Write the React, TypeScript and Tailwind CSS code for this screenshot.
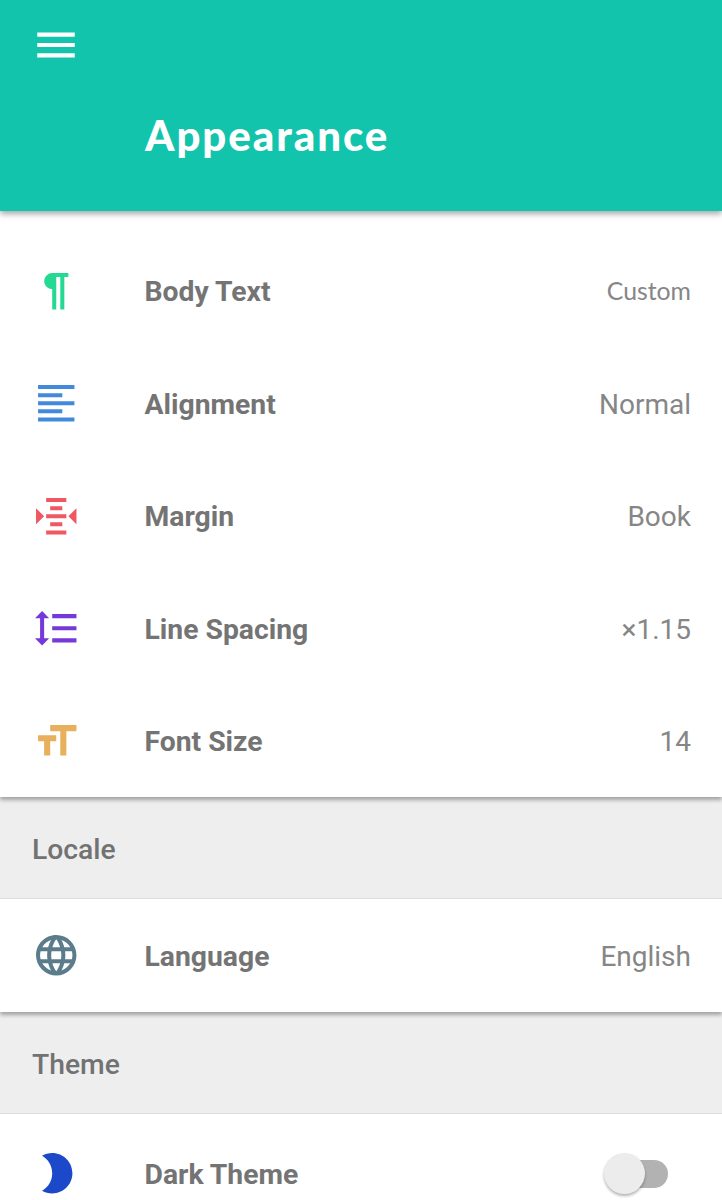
import type { ReactNode } from "react";

const icons = {
  pilcrow:
    "M10,11A4,4 0 0,1 6,7A4,4 0 0,1 10,3H18V5H16V21H14V5H12V21H10V11Z",
  align:
    "M3,3H21V5H3V3M3,7H15V9H3V7M3,11H21V13H3V11M3,15H15V17H3V15M3,19H21V21H3V19Z",
  margin:
    "M7,3H17V5H7V3M9,7H15V9H9V7M7,11H17V13H7V11M9,15H15V17H9V15M7,19H17V21H7V19M2,8L6,12L2,16V8M22,8L18,12L22,16V8Z",
  spacing:
    "M10,13H22V11H10M10,19H22V17H10M10,7H22V5H10M6,7H8.5L5,3.5L1.5,7H4V17H1.5L5,20.5L8.5,17H6V7Z",
  size: "M3,12H6V19H9V12H12V9H3M9,4V7H14V19H17V7H22V4H9Z",
  globe:
    "M16.36,14C16.44,13.34 16.5,12.68 16.5,12C16.5,11.32 16.44,10.66 16.36,10H19.74C19.9,10.64 20,11.31 20,12C20,12.69 19.9,13.36 19.74,14M14.59,19.56C15.19,18.45 15.65,17.25 15.97,16H18.92C17.96,17.65 16.43,18.93 14.59,19.56M14.34,14H9.66C9.56,13.34 9.5,12.68 9.5,12C9.5,11.32 9.56,10.65 9.66,10H14.34C14.43,10.65 14.5,11.32 14.5,12C14.5,12.68 14.43,13.34 14.34,14M12,19.96C11.17,18.76 10.5,17.43 10.09,16H13.91C13.5,17.43 12.83,18.76 12,19.96M8,8H5.08C6.03,6.34 7.57,5.06 9.4,4.44C8.8,5.55 8.35,6.75 8,8M5.08,16H8C8.35,17.25 8.8,18.45 9.4,19.56C7.57,18.93 6.03,17.65 5.08,16M4.26,14C4.1,13.36 4,12.69 4,12C4,11.31 4.1,10.64 4.26,10H7.64C7.56,10.66 7.5,11.32 7.5,12C7.5,12.68 7.56,13.34 7.64,14M12,4.03C12.83,5.23 13.5,6.57 13.91,8H10.09C10.5,6.57 11.17,5.23 12,4.03M18.92,8H15.97C15.65,6.75 15.19,5.55 14.59,4.44C16.43,5.07 17.96,6.34 18.92,8M12,2C6.47,2 2,6.5 2,12A10,10 0 0,0 12,22A10,10 0 0,0 22,12A10,10 0 0,0 12,2Z",
  moon: "M10 2c-1.82 0-3.53.5-5 1.35C7.99 5.08 10 8.3 10 12s-2.01 6.92-5 8.65C6.47 21.5 8.18 22 10 22c5.52 0 10-4.48 10-10S15.52 2 10 2z",
};

type RowProps = {
  icon: keyof typeof icons;
  color: string;
  label: string;
  height?: string;
  children: ReactNode;
};

const appearanceRows: (Omit<RowProps, "children"> & {
  value: string;
  valueClass?: string;
})[] = [
  {
    icon: "pilcrow",
    color: "text-[#25d993]",
    label: "Body Text",
    value: "Custom",
    valueClass: "font-[Lato,sans-serif] text-[24.8px]",
  },
  { icon: "align", color: "text-[#4289dc]", label: "Alignment", value: "Normal" },
  { icon: "margin", color: "text-[#ef5860]", label: "Margin", value: "Book" },
  { icon: "spacing", color: "text-[#7439d8]", label: "Line Spacing", value: "×1.15" },
  { icon: "size", color: "text-[#e8b05c]", label: "Font Size", value: "14" },
];

const SettingRow = ({
  icon,
  color,
  label,
  height = "h-[112.5px]",
  children,
}: RowProps) => (
  <div className={`flex items-center pr-[31px] pl-8 ${height}`}>
    <svg viewBox="0 0 24 24" className={`size-[48.5px] shrink-0 fill-current ${color}`}>
      <path d={icons[icon]} />
    </svg>
    <span className="ml-[64px] flex-1 pt-[3.5px] text-[28.3px] font-bold text-[#747474]">
      {label}
    </span>
    {children}
  </div>
);

const Value = ({
  className = "pt-[3px] text-[28px]",
  children,
}: {
  className?: string;
  children: ReactNode;
}) => <span className={`text-[#868686] ${className}`}>{children}</span>;

const SectionTitle = ({ children }: { children: ReactNode }) => (
  <h2 className="flex h-[102px] items-center border-b border-[#e0e0e0] bg-[#eeeeee] pt-[5px] pl-8 text-[28.3px] font-medium text-[#727272]">
    {children}
  </h2>
);

const Card = ({ className = "", children }: { className?: string; children: ReactNode }) => (
  <section
    className={`relative bg-white shadow-[0_3px_4px_rgba(0,0,0,0.32)] ${className}`}
  >
    {children}
  </section>
);

export default function App() {
  return (
    <div className="h-[1200px] w-[722px] overflow-hidden bg-white font-[Roboto,sans-serif]">
      <header className="relative z-10 h-[211px] bg-[#13c4ad] pt-5 pl-[31px] shadow-[0_3px_6px_rgba(0,0,0,0.35)]">
        <button aria-label="Open menu" className="block">
          <svg viewBox="0 0 24 24" className="size-[50px] fill-white">
            <path d="M3,6H21V8H3V6M3,11H21V13H3V11M3,16H21V18H3V16Z" />
          </svg>
        </button>
        <h1 className="mt-[38px] ml-[114px] font-[Lato,sans-serif] text-[42px] leading-[54px] font-black tracking-[1.95px] text-white">
          Appearance
        </h1>
      </header>

      <Card className="pt-[23.5px]">
        {appearanceRows.map((row) => (
          <SettingRow key={row.label} icon={row.icon} color={row.color} label={row.label}>
            <Value className={row.valueClass}>{row.value}</Value>
          </SettingRow>
        ))}
      </Card>

      <SectionTitle>Locale</SectionTitle>
      <Card>
        <SettingRow icon="globe" color="text-[#5b7c8a]" label="Language" height="h-[113px]">
          <Value>English</Value>
        </SettingRow>
      </Card>

      <SectionTitle>Theme</SectionTitle>
      <Card>
        <SettingRow icon="moon" color="text-[#1b49c9]" label="Dark Theme" height="h-[119px]">
          <button
            role="switch"
            aria-checked={false}
            aria-label="Dark Theme"
            className="relative mt-px mr-[23px] h-7 w-14 rounded-full bg-[#b2b2b2]"
          >
            <span className="absolute -top-[7px] -left-2 size-[41px] rounded-full bg-[#ececec] shadow-[0_2px_3px_rgba(0,0,0,0.3)]" />
          </button>
        </SettingRow>
      </Card>
    </div>
  );
}
